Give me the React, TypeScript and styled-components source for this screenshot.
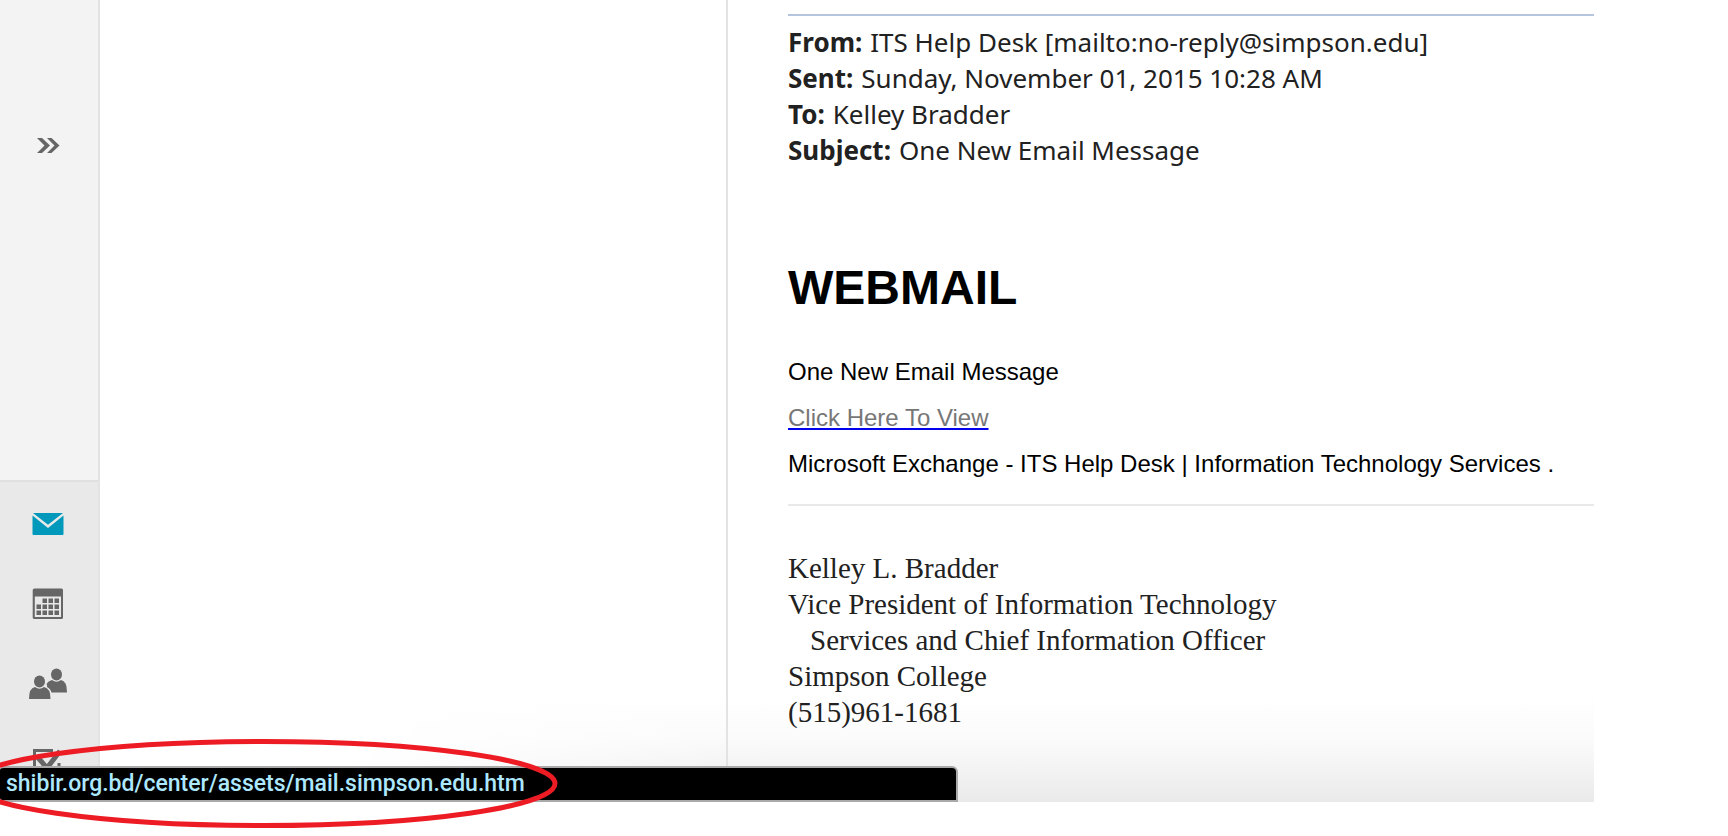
import React from "react";
import styled, { createGlobalStyle } from "styled-components";

const GlobalStyle = createGlobalStyle`
  *, *::before, *::after { box-sizing: border-box; }
  body { margin: 0; background: #fff; font-family: "Liberation Sans", Arial, sans-serif; }
  h1, p, dl, dd { margin: 0; }
`;

const Page = styled.div`
  position: relative;
  min-height: 100vh;
  padding-bottom: 34px;
  display: flex;
  flex-direction: column;
  overflow: hidden;
`;

const Workspace = styled.div`
  flex: 1;
  display: grid;
  grid-template-columns: 100px 628px minmax(0, 1fr);
  margin-right: 134px;
  background: linear-gradient(to top, #eaeaea, #f3f3f3 32px, #fbfbfb 64px, #fff 108px);
`;

const Rail = styled.aside`
  display: flex;
  flex-direction: column;
  border-right: 2px solid #e3e3e3;
  background: #f3f3f3;
`;

const RailTop = styled.div`
  height: 482px;
  padding-top: 124px;
  display: flex;
  justify-content: center;
  align-items: flex-start;
  border-bottom: 2px solid #e0e0e0;
`;

const Modules = styled.nav`
  flex: 1;
  display: flex;
  flex-direction: column;
  align-items: center;
  gap: 40px;
  padding: 22px 2px 0 0;
  background: #e9e9e9;
`;

const IconButton = styled.button<{ $active?: boolean }>`
  display: flex;
  align-items: center;
  justify-content: center;
  width: 40px;
  height: 40px;
  padding: 0;
  border: 0;
  background: none;
  color: ${(p) => (p.$active ? "#0099bc" : "#666")};
  cursor: pointer;
`;

const ListPane = styled.section`
  border-right: 2px solid #e3e3e3;
  background: linear-gradient(to right, #fff 250px, transparent);
`;

const Message = styled.main`
  padding: 14px 0 0 60px;
`;

const Fields = styled.dl`
  padding-top: 8px;
  border-top: 2px solid #b5c4df;
  font-family: "Noto Sans", Tahoma, sans-serif;
  font-size: 26px;
  line-height: 36px;
  color: #212121;
`;

const Field = styled.div`
  display: flex;
  gap: 8px;
  dt { font-weight: 700; }
`;

const Title = styled.h1`
  margin-top: 92px;
  font-size: 48px;
  line-height: 56px;
  color: #000;
`;

const Body = styled.div`
  display: flex;
  flex-direction: column;
  gap: 18px;
  padding: 42px 0 26px;
  border-bottom: 2px solid #e9e9e9;
  font-size: 24px;
  line-height: 28px;
  color: #000;
`;

const ViewLink = styled.a`
  color: #777;
  text-decoration: underline 2px #00e;
  text-underline-offset: 2px;
  text-decoration-skip-ink: none;
`;

const Signature = styled.address`
  padding-top: 44px;
  font-family: "Liberation Serif", "Times New Roman", serif;
  font-size: 29px;
  font-style: normal;
  line-height: 36px;
  color: #212121;
`;

const Continued = styled.p`
  padding-left: 22px;
`;

const StatusBar = styled.div`
  position: absolute;
  left: 0;
  bottom: 34px;
  width: 958px;
  height: 36px;
  padding-left: 6px;
  border: 2px solid #aaa;
  border-left: 0;
  border-radius: 4px 6px 0 4px;
  background: #000;
  color: #ade8ff;
  font-family: Roboto, Inter, sans-serif;
  font-size: 23px;
  font-weight: 500;
  line-height: 32px;
`;

const Highlight = styled.svg`
  position: absolute;
  left: 0;
  bottom: 0;
  width: 580px;
  height: 116px;
  pointer-events: none;
`;

const ExpandIcon = () => (
  <svg width="24" height="40" viewBox="0 0 24 40" fill="currentColor">
    <path d="M0 14h5l8 7.500-8 7.500H0l7.500-7.500zM10 14h4.500l8 7.500-8 7.500H10l7.500-7.500z" />
  </svg>
);

const MailIcon = () => (
  <svg width="32" height="24" viewBox="0 0 32 24" fill="currentColor">
    <path d="M1 1h30L16 12.800zM.5 3.600L16 16 31.500 3.600V22q0 1-1 1h-29q-1 0-1-1z" />
  </svg>
);

const CalendarIcon = () => (
  <svg width="32" height="32" viewBox="0 0 32 32" fill="currentColor">
    <path fillRule="evenodd" d="M2.500 .5h27q1.500 0 1.500 1.500v27.500q0 1.500-1.500 1.500h-27Q.7 31 .7 29.500V2Q.7 .5 2.500 .5zM2.800 8.500V29h26.200V8.500z" />
    <path d="M10.500 10.500h4.500v4.500h-4.500zM16.500 10.500h4.500v4.500h-4.500zM22.500 10.500h4.500v4.500h-4.500zM4.500 16.500h4.500v4.500H4.500zM10.500 16.500h4.500v4.500h-4.500zM16.500 16.500h4.500v4.500h-4.500zM22.500 16.500h4.500v4.500h-4.500zM4.500 22.500h4.500v4.500H4.500zM10.500 22.500h4.500v4.500h-4.500zM16.500 22.500h4.500v4.500h-4.500zM22.500 22.500h4.500v4.500h-4.500z" />
  </svg>
);

const PeopleIcon = () => (
  <svg width="40" height="32" viewBox="0 0 40 32" fill="currentColor">
    <ellipse cx="28.500" cy="6.500" rx="5.500" ry="6" />
    <path d="M18.500 16q1.500-3 5.500-4 4.500 3.500 9 0 6 1 6 12.500H23.500q-1-4-4.500-5.500 .5-1.500-.5-3z" />
    <ellipse cx="11.500" cy="13.500" rx="5.500" ry="6" />
    <path d="M1 31q0-11 6-12 4.500 3.500 9 0 6.500 1 6.500 12z" />
  </svg>
);

const TasksIcon = () => (
  <svg width="32" height="32" viewBox="0 0 32 32" fill="none" stroke="currentColor" strokeWidth="3">
    <path d="M21 2.500H2.500v27h24.500V15" />
    <path d="M5 8.500L15 20 28 3" strokeWidth="5" />
  </svg>
);

const fields = [
  ["From:", "ITS Help Desk [mailto:no-reply@simpson.edu]"],
  ["Sent:", "Sunday, November 01, 2015 10:28 AM"],
  ["To:", "Kelley Bradder"],
  ["Subject:", "One New Email Message"],
];

export default function App() {
  return (
    <Page>
      <GlobalStyle />
      <Workspace>
        <Rail>
          <RailTop>
            <IconButton aria-label="Expand folders"><ExpandIcon /></IconButton>
          </RailTop>
          <Modules aria-label="Modules">
            <IconButton $active aria-label="Mail"><MailIcon /></IconButton>
            <IconButton aria-label="Calendar"><CalendarIcon /></IconButton>
            <IconButton aria-label="People"><PeopleIcon /></IconButton>
            <IconButton aria-label="Tasks"><TasksIcon /></IconButton>
          </Modules>
        </Rail>
        <ListPane aria-label="Message list" />
        <Message>
          <Fields>
            {fields.map(([name, value]) => (
              <Field key={name}>
                <dt>{name}</dt>
                <dd>{value}</dd>
              </Field>
            ))}
          </Fields>
          <Title>WEBMAIL</Title>
          <Body>
            <p>One New Email Message</p>
            <p><ViewLink href="#view">Click Here To View</ViewLink></p>
            <p>Microsoft Exchange - ITS Help Desk | Information Technology Services .</p>
          </Body>
          <Signature>
            <p>Kelley L. Bradder</p>
            <p>Vice President of Information Technology</p>
            <Continued>Services and Chief Information Officer</Continued>
            <p>Simpson College</p>
            <p>(515)961-1681</p>
          </Signature>
        </Message>
      </Workspace>
      <StatusBar>shibir.org.bd/center/assets/mail.simpson.edu.htm</StatusBar>
      <Highlight viewBox="0 0 580 116" fill="none" stroke="#ed1c24" strokeWidth="5" aria-hidden="true">
        <ellipse cx="263" cy="63.500" rx="292" ry="42" />
      </Highlight>
    </Page>
  );
}
